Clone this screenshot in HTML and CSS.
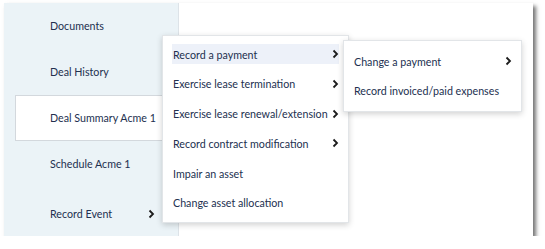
FILE: index.html
```html
<!DOCTYPE html>
<html>
<head>
<meta charset="utf-8">
<link rel="stylesheet" href="styles.css">
</head>
<body>
<div class="frame">
  <nav class="sidebar">
    <div class="nav-item">Documents</div>
    <div class="nav-item">Deal History</div>
    <div class="nav-item active">Deal Summary Acme 1</div>
    <div class="nav-item">Schedule Acme 1</div>
    <div class="nav-item has-sub">Record Event
      <svg class="chev" width="7" height="10" viewBox="0 0 7 10"><polyline points="1.5,1.5 5,5 1.5,8.5" fill="none" stroke="#1c1c1c" stroke-width="1.8"/></svg>
    </div>
  </nav>
  <main class="main"></main>

  <ul class="menu menu-main">
    <li class="menu-item hover">Record a payment<svg class="chev" width="7" height="10" viewBox="0 0 7 10"><polyline points="1.5,1.5 5,5 1.5,8.5" fill="none" stroke="#1c1c1c" stroke-width="1.8"/></svg></li>
    <li class="menu-item">Exercise lease termination<svg class="chev" width="7" height="10" viewBox="0 0 7 10"><polyline points="1.5,1.5 5,5 1.5,8.5" fill="none" stroke="#1c1c1c" stroke-width="1.8"/></svg></li>
    <li class="menu-item">Exercise lease renewal/extension<svg class="chev" width="7" height="10" viewBox="0 0 7 10"><polyline points="1.5,1.5 5,5 1.5,8.5" fill="none" stroke="#1c1c1c" stroke-width="1.8"/></svg></li>
    <li class="menu-item">Record contract modification<svg class="chev" width="7" height="10" viewBox="0 0 7 10"><polyline points="1.5,1.5 5,5 1.5,8.5" fill="none" stroke="#1c1c1c" stroke-width="1.8"/></svg></li>
    <li class="menu-item">Impair an asset</li>
    <li class="menu-item">Change asset allocation</li>
  </ul>

  <ul class="menu menu-sub">
    <li class="menu-item">Change a payment<svg class="chev" width="7" height="10" viewBox="0 0 7 10"><polyline points="1.5,1.5 5,5 1.5,8.5" fill="none" stroke="#1c1c1c" stroke-width="1.8"/></svg></li>
    <li class="menu-item">Record invoiced/paid expenses</li>
  </ul>
</div>
</body>
</html>
```
FILE: styles.css
```css
* { box-sizing: border-box; }
html, body { margin: 0; padding: 0; background: #fff; }
body {
  font-family: Lato, "Open Sans", sans-serif;
  font-size: 10.7px;
  color: #22304f;
  padding: 3px 0 0 4px;
}
.frame {
  position: relative;
  width: 529px;
  height: 233px;
  background: #fff;
  display: flex;
  box-shadow: 3px 3px 4px rgba(0,0,0,0.55);
}
.sidebar {
  width: 175px;
  background: #ebf3f7;
  border-right: 1px solid #dde3e8;
  display: flex;
  flex-direction: column;
}
.nav-item {
  height: 46px;
  display: flex;
  align-items: center;
  padding-left: 46px;
  padding-bottom: 1px;
  white-space: nowrap;
}
.nav-item.active {
  background: #fff;
  border: 1px solid #d3d8dd;
  border-right: none;
  margin-left: 11px;
  margin-right: -2px;
  padding-left: 34px;
}
.nav-item.has-sub {
  height: 49px;
  padding-top: 5px;
}
.nav-item.has-sub .chev { margin-left: 36px; }
.main { flex: 1; }
.menu {
  position: absolute;
  list-style: none;
  margin: 0;
  background: #fff;
  border: 1px solid #e2e5e8;
  box-shadow: 0 2px 6px rgba(0,0,0,0.18);
  display: flex;
  flex-direction: column;
}
.menu-main {
  left: 158px;
  top: 32px;
  width: 187px;
  padding: 8px 9px 9px 9px;
  gap: 9.8px;
}
.menu-sub {
  left: 339px;
  top: 37px;
  width: 179px;
  padding: 10px 9px 10px 9px;
  gap: 9.8px;
}
.menu-item {
  height: 20px;
  display: flex;
  align-items: center;
  justify-content: space-between;
  white-space: nowrap;
  padding-left: 1px;
  padding-right: 0;
}
.menu-item.hover { background: #edf1f9; }
.chev { flex: none; display: block; }
```
